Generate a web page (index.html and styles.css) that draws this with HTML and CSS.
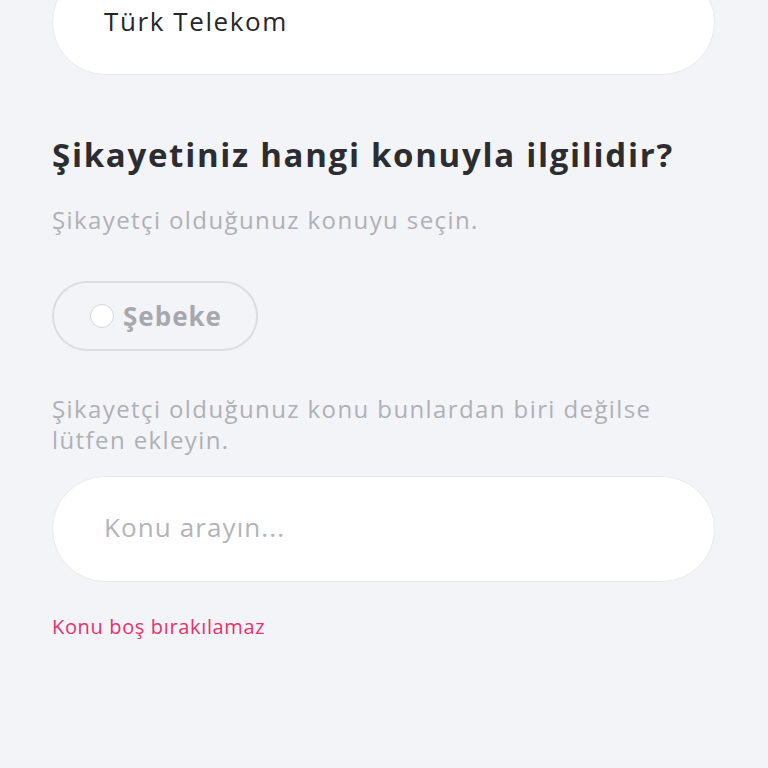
FILE: index.html
```html
<!DOCTYPE html>
<html lang="tr">
<head>
<meta charset="utf-8">
<link rel="stylesheet" href="styles.css">
</head>
<body>
<main class="form">
  <div class="field field-top"><span class="field-value">Türk Telekom</span></div>
  <h2 class="title">Şikayetiniz hangi konuyla ilgilidir?</h2>
  <p class="hint">Şikayetçi olduğunuz konuyu seçin.</p>
  <div class="chips">
    <label class="chip"><span class="radio"></span><span class="chip-label">Şebeke</span></label>
  </div>
  <p class="hint hint-multi">Şikayetçi olduğunuz konu bunlardan biri değilse lütfen ekleyin.</p>
  <div class="field field-search"><span class="placeholder">Konu arayın...</span></div>
  <p class="error">Konu boş bırakılamaz</p>
</main>
</body>
</html>
```
FILE: styles.css
```css
html, body {
  margin: 0;
  padding: 0;
  background: #f3f4f8;
  height: 100%;
  overflow: hidden;
}
body {
  font-family: "Open Sans", "Noto Sans", sans-serif;
}
.form {
  display: flex;
  flex-direction: column;
  padding: 0 53px 0 52px;
}
.field {
  box-sizing: border-box;
  height: 106px;
  background: #fff;
  border: 1.5px solid #e9eaee;
  border-radius: 53px;
  display: flex;
  align-items: center;
  padding-left: 51px;
}
.field-top {
  margin-top: -31px;
  padding-bottom: 2px;
}
.field-value {
  font-size: 26px;
  color: #26272b;
  letter-spacing: 1.6px;
}
.title {
  margin: 60px 0 0;
  font-size: 33px;
  line-height: 40px;
  font-weight: 700;
  color: #2c2d31;
  letter-spacing: 1.7px;
  white-space: nowrap;
}
.hint {
  margin: 29px 0 0;
  font-size: 24px;
  line-height: 31px;
  color: #afb0b6;
  letter-spacing: 1.4px;
}
.chips {
  display: flex;
  margin-top: 46px;
}
.chip {
  box-sizing: border-box;
  height: 70px;
  width: 206px;
  border: 2px solid #dcdde1;
  border-radius: 35px;
  display: flex;
  align-items: center;
  padding-left: 36px;
  gap: 9px;
}
.radio {
  box-sizing: border-box;
  width: 24px;
  height: 24px;
  border-radius: 50%;
  background: #fff;
  border: 1.5px solid #d5d6da;
}
.chip-label {
  font-size: 26px;
  font-weight: 700;
  color: #a7a8ae;
  letter-spacing: 1px;
}
.hint-multi {
  margin-top: 42px;
}
.field-search {
  margin-top: 21px;
  padding-bottom: 5px;
}
.placeholder {
  font-size: 26px;
  color: #b3b4b8;
  letter-spacing: 1.1px;
}
.error {
  margin: 32px 0 0;
  font-size: 20px;
  line-height: 26px;
  color: #e5336a;
  letter-spacing: 0.65px;
}
```
